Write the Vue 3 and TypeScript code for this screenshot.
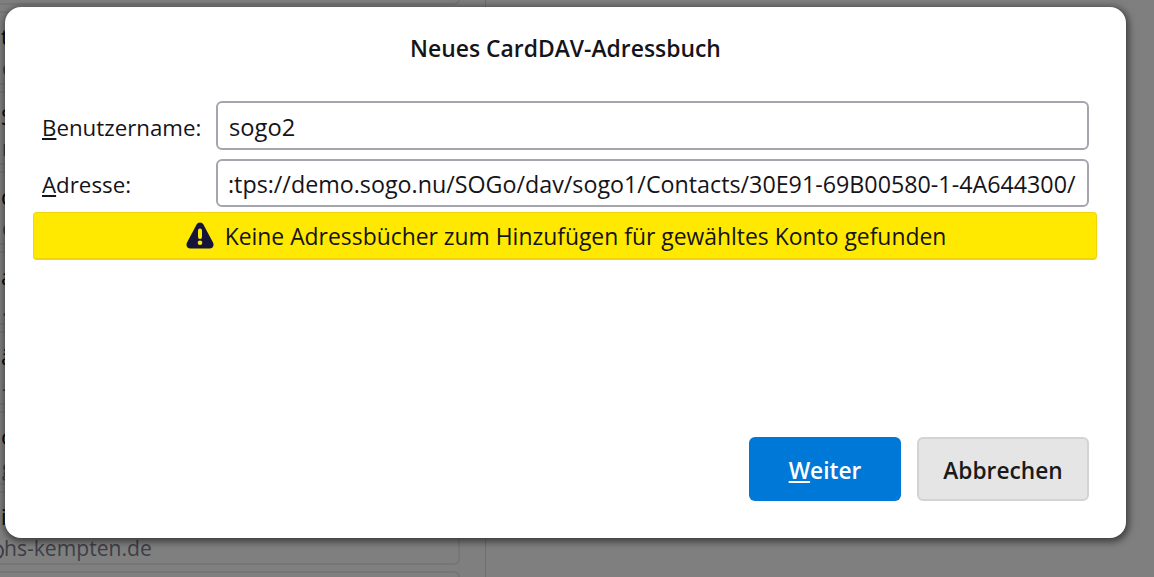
<script setup lang="ts">
interface Card { name: string; detail: string; ring?: boolean }
const cards: Card[] = [
  { name: '', detail: '' },
  { name: 't', detail: 'e' },
  { name: 'S', detail: 'n' },
  { name: 'd', detail: 'c' },
  { name: 'a', detail: '.' },
  { name: 'ä', detail: '-' },
  { name: 'o', detail: 'g' },
  { name: 'i', detail: 'hs-kempten.de', ring: true },
  { name: '', detail: '' }
]
</script>

<template>
  <div class="page">
    <div class="backdrop">
      <div class="list">
        <div v-for="(c, i) in cards" :key="i" class="card">
          <div class="name">{{ c.name }}</div>
          <div class="detail" :class="{ ringed: c.ring }">{{ c.detail }}</div>
        </div>
      </div>
    </div>
    <div class="dialog">
      <h1 class="title">Neues CardDAV-Adressbuch</h1>
      <div class="form">
        <label class="label"><u>B</u>enutzername:</label>
        <div class="input user">sogo2</div>
        <label class="label"><u>A</u>dresse:</label>
        <div class="input url">:tps://demo.sogo.nu/SOGo/dav/sogo1/Contacts/30E91-69B00580-1-4A644300/</div>
      </div>
      <div class="notice">
        <svg class="warn" width="28" height="27" viewBox="0 0 28 27" aria-hidden="true">
          <path fill="#15143a" d="M14 0.500c-1.500 0-2.700 .8-3.400 2L1 20.600C-.5 23.500 1.300 26.500 4.400 26.500h19.200c3.100 0 4.900-3 3.400-5.900L17.400 2.500C16.700 1.300 15.500 .5 14 .5z"/>
          <rect x="12" y="6.500" width="4" height="10.500" rx="2" fill="#ffe900"/>
          <circle cx="14" cy="20.800" r="2.300" fill="#ffe900"/>
        </svg>
        <span>Keine Adressbücher zum Hinzufügen für gewähltes Konto gefunden</span>
      </div>
      <div class="spacer"></div>
      <div class="actions">
        <button class="btn primary"><u>W</u>eiter</button>
        <button class="btn secondary">Abbrechen</button>
      </div>
    </div>
  </div>
</template>

<style>
html, body { margin: 0; background: #7f7f7f; }
</style>

<style scoped>
.page {
  position: relative;
  width: 1154px;
  height: 577px;
  overflow: hidden;
  background: #7f7f7f;
  font-family: "Open Sans", "Noto Sans", sans-serif;
}
.backdrop {
  width: 486px;
  height: 577px;
  box-sizing: border-box;
  border-right: 1px solid #6e6e6e;
  overflow: hidden;
}
.list {
  margin-top: -69px;
  display: flex;
  flex-direction: column;
  gap: 6px;
}
.card {
  flex: none;
  width: 460px;
  height: 74px;
  box-sizing: border-box;
  border: 2px solid #767676;
  border-left: none;
  border-radius: 0 6px 6px 0;
  padding-top: 7px;
}
.name {
  height: 34px;
  font-size: 22px;
  line-height: 32px;
  padding-left: 1px;
  color: #0a0a10;
}
.detail {
  height: 30px;
  font-size: 21.100px;
  line-height: 28px;
  padding-left: 2px;
  color: #3e3e47;
}
.ringed {
  position: relative;
  padding-left: 4px;
}
.ringed::before {
  content: "";
  position: absolute;
  left: -9px;
  top: 10px;
  width: 9px;
  height: 11px;
  border: 2px solid #3e3e47;
  border-radius: 50%;
}
.dialog {
  position: absolute;
  left: 5px;
  top: 7px;
  width: 1121px;
  height: 531px;
  box-sizing: border-box;
  padding: 28px 37px 37px 28px;
  background: #fff;
  border-radius: 16px;
  box-shadow: 1px 2px 7px 2px rgba(0, 0, 0, 0.5);
  display: flex;
  flex-direction: column;
  color: #15141a;
}
.title {
  margin: 0;
  font-size: 22.900px;
  font-weight: 600;
  line-height: 28px;
  text-align: center;
  padding-left: 9px;
}
.form {
  margin-top: 38px;
  margin-left: 9px;
  display: grid;
  grid-template-columns: 174px 1fr;
  row-gap: 9px;
  align-items: center;
}
.label {
  font-size: 22.300px;
  line-height: 28px;
  padding-top: 4px;
}
.input {
  box-sizing: border-box;
  border: 2px solid #a5a5ad;
  border-radius: 6px;
  white-space: nowrap;
  overflow: hidden;
}
.user {
  height: 49px;
  padding: 3px 11px 0;
  font-size: 23.700px;
  line-height: 42px;
}
.url {
  height: 48px;
  padding: 3px 10px 0;
  font-size: 23.280px;
  line-height: 41px;
}
.notice {
  margin-top: 5px;
  margin-right: -8px;
  height: 48px;
  box-sizing: border-box;
  background: #ffe900;
  border: 1px solid #f0d40e;
  border-bottom-width: 2px;
  border-radius: 4px;
  display: flex;
  align-items: center;
  justify-content: center;
  gap: 11px;
  font-size: 22.900px;
  padding: 2px 0 0 2px;
}
.warn { flex: none; margin-top: -2px; }
.spacer { flex: 1; }
.actions {
  display: flex;
  justify-content: flex-end;
  gap: 16px;
}
.btn {
  height: 64px;
  box-sizing: border-box;
  border-radius: 6px;
  font-family: inherit;
  font-size: 22.700px;
  font-weight: 600;
  padding: 2px 0 0;
}
.primary {
  width: 152px;
  background: #0078d7;
  color: #fff;
  border: none;
}
.secondary {
  width: 172px;
  background: #e5e5e5;
  color: #1a1a1a;
  border: 2px solid #d3d3d3;
}
</style>
